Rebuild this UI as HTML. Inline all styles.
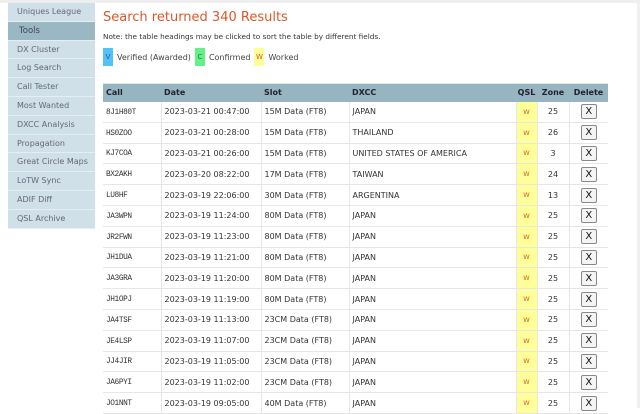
<!DOCTYPE html>
<html><head><meta charset="utf-8"><style>
*{margin:0;padding:0;box-sizing:border-box}
body{width:640px;height:408px;overflow:hidden;background:#fff;font-family:"DejaVu Sans","Liberation Sans",sans-serif;font-size:8px;color:#333;position:relative}
.topbar{position:absolute;left:0;top:0;width:640px;height:3px;background:#eee}
.rbar{position:absolute;right:0;top:3px;width:3px;height:405px;background:#f0f0f0}
.side{position:absolute;left:8px;top:3px;width:87px}
.side div{height:18.8px;line-height:18px;background:#cfe0e8;border-bottom:1px solid #e6eef2;padding-left:9px;color:#667;font-size:8px}
.side div.t{background:#9ab8c4;color:#445;padding-left:11px;font-size:8.5px}
h1{position:absolute;left:103px;top:10px;font-weight:normal;color:#d9592a;font-size:13px;font-family:"DejaVu Sans",sans-serif}
.note{position:absolute;left:103px;top:32px;font-size:7.3px;color:#333}
.leg{position:absolute;left:103px;top:48px;height:18px;display:flex;align-items:center;font-size:8px;color:#444}
.leg span.b{display:inline-block;width:10px;height:18px;line-height:18px;text-align:center;font-size:7px;margin-right:4px}
.leg span.l{margin-right:4px}
table{position:absolute;left:103px;top:83px;width:505px;border-collapse:collapse;table-layout:fixed}
th{background:#97b4c1;height:18px;text-align:left;font-size:8px;color:#223;padding-left:3px;border-top:1px solid #dfe7eb;font-weight:bold}
td{height:20.8px;border-bottom:1px solid #e6e6e6;border-right:1px solid #e6e6e6;padding-left:3px;font-size:8px;color:#333;white-space:nowrap;overflow:hidden;vertical-align:middle}
td.c{font-family:"Liberation Mono",monospace;font-size:7.8px;letter-spacing:-0.4px;line-height:12px;padding-top:2px}
td.q{background:#ffff99;color:#e0552a;text-align:center;padding:0;font-size:6.5px}
td.z,th.z{text-align:center;padding:0}
td.d{text-align:center;padding:0;border-right:none}
.x{display:inline-block;width:16px;height:15px;border:1px solid #888;border-radius:2px;background:#f4f4f4;font-size:10px;line-height:13px;color:#111}
</style></head><body>
<div class="topbar"></div><div class="rbar"></div>
<div class="side">
<div>Uniques League</div><div class="t">Tools</div><div>DX Cluster</div><div>Log Search</div><div>Call Tester</div><div>Most Wanted</div><div>DXCC Analysis</div><div>Propagation</div><div>Great Circle Maps</div><div>LoTW Sync</div><div>ADIF Diff</div><div>QSL Archive</div>
</div>
<h1>Search returned 340 Results</h1>
<div class="note">Note: the table headings may be clicked to sort the table by different fields.</div>
<div class="leg"><span class="b" style="background:#55c2f5;color:#2255aa">V</span><span class="l">Verified (Awarded)</span><span class="b" style="background:#66f08a;color:#227744">C</span><span class="l">Confirmed</span><span class="b" style="background:#ffff99;color:#e0552a">W</span><span class="l">Worked</span></div>
<table>
<colgroup><col style="width:58px"><col style="width:100px"><col style="width:88px"><col style="width:167px"><col style="width:21px"><col style="width:32px"><col style="width:39px"></colgroup>
<tr><th>Call</th><th>Date</th><th>Slot</th><th>DXCC</th><th class="z">QSL</th><th class="z">Zone</th><th class="z">Delete</th></tr>
<tr><td class="c">8J1H80T</td><td>2023-03-21 00:47:00</td><td>15M Data (FT8)</td><td>JAPAN</td><td class="q">W</td><td class="z">25</td><td class="d"><span class="x">X</span></td></tr>
<tr><td class="c">HS0ZOO</td><td>2023-03-21 00:28:00</td><td>15M Data (FT8)</td><td>THAILAND</td><td class="q">W</td><td class="z">26</td><td class="d"><span class="x">X</span></td></tr>
<tr><td class="c">KJ7COA</td><td>2023-03-21 00:26:00</td><td>15M Data (FT8)</td><td>UNITED STATES OF AMERICA</td><td class="q">W</td><td class="z">3</td><td class="d"><span class="x">X</span></td></tr>
<tr><td class="c">BX2AKH</td><td>2023-03-20 08:22:00</td><td>17M Data (FT8)</td><td>TAIWAN</td><td class="q">W</td><td class="z">24</td><td class="d"><span class="x">X</span></td></tr>
<tr><td class="c">LU8HF</td><td>2023-03-19 22:06:00</td><td>30M Data (FT8)</td><td>ARGENTINA</td><td class="q">W</td><td class="z">13</td><td class="d"><span class="x">X</span></td></tr>
<tr><td class="c">JA3WPN</td><td>2023-03-19 11:24:00</td><td>80M Data (FT8)</td><td>JAPAN</td><td class="q">W</td><td class="z">25</td><td class="d"><span class="x">X</span></td></tr>
<tr><td class="c">JR2FWN</td><td>2023-03-19 11:23:00</td><td>80M Data (FT8)</td><td>JAPAN</td><td class="q">W</td><td class="z">25</td><td class="d"><span class="x">X</span></td></tr>
<tr><td class="c">JH1DUA</td><td>2023-03-19 11:21:00</td><td>80M Data (FT8)</td><td>JAPAN</td><td class="q">W</td><td class="z">25</td><td class="d"><span class="x">X</span></td></tr>
<tr><td class="c">JA3GRA</td><td>2023-03-19 11:20:00</td><td>80M Data (FT8)</td><td>JAPAN</td><td class="q">W</td><td class="z">25</td><td class="d"><span class="x">X</span></td></tr>
<tr><td class="c">JH1OPJ</td><td>2023-03-19 11:19:00</td><td>80M Data (FT8)</td><td>JAPAN</td><td class="q">W</td><td class="z">25</td><td class="d"><span class="x">X</span></td></tr>
<tr><td class="c">JA4TSF</td><td>2023-03-19 11:13:00</td><td>23CM Data (FT8)</td><td>JAPAN</td><td class="q">W</td><td class="z">25</td><td class="d"><span class="x">X</span></td></tr>
<tr><td class="c">JE4LSP</td><td>2023-03-19 11:07:00</td><td>23CM Data (FT8)</td><td>JAPAN</td><td class="q">W</td><td class="z">25</td><td class="d"><span class="x">X</span></td></tr>
<tr><td class="c">JJ4JIR</td><td>2023-03-19 11:05:00</td><td>23CM Data (FT8)</td><td>JAPAN</td><td class="q">W</td><td class="z">25</td><td class="d"><span class="x">X</span></td></tr>
<tr><td class="c">JA6PYI</td><td>2023-03-19 11:02:00</td><td>23CM Data (FT8)</td><td>JAPAN</td><td class="q">W</td><td class="z">25</td><td class="d"><span class="x">X</span></td></tr>
<tr><td class="c">JO1NNT</td><td>2023-03-19 09:05:00</td><td>40M Data (FT8)</td><td>JAPAN</td><td class="q">W</td><td class="z">25</td><td class="d"><span class="x">X</span></td></tr>
</table>
</body></html>
